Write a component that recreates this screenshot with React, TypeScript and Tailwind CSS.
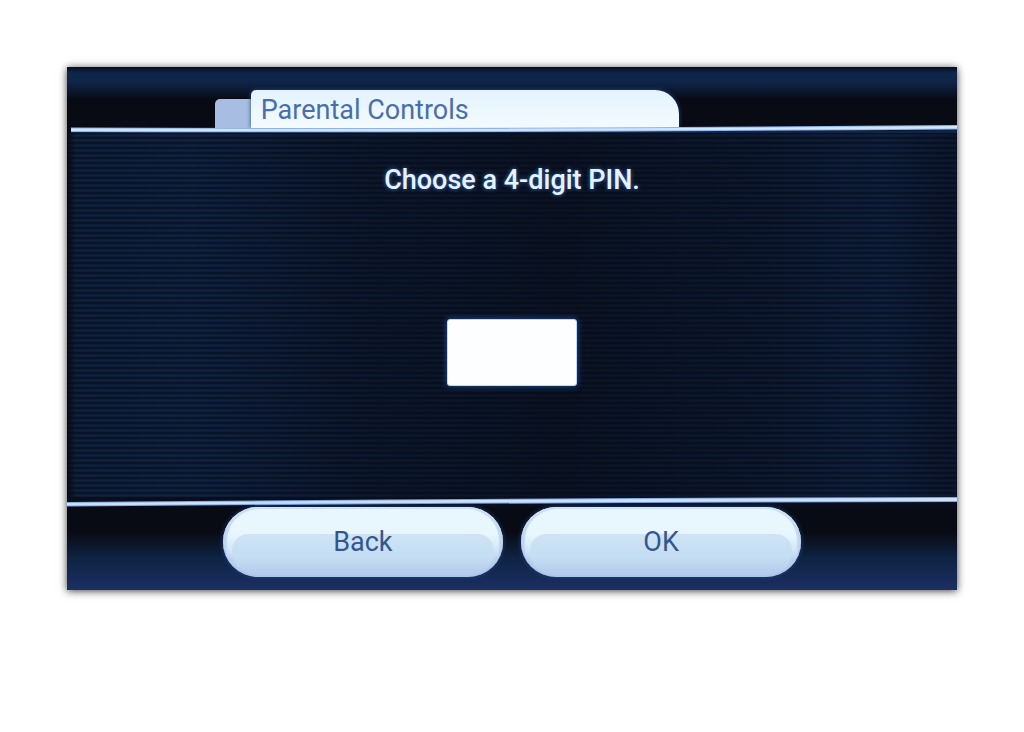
import { useState } from "react";
import type { ReactNode } from "react";

function PillButton({ children }: { children: ReactNode }) {
  return (
    <button
      type="button"
      className="relative h-[70px] min-w-0 flex-1 cursor-pointer overflow-hidden rounded-full bg-linear-to-b from-[#dcecf9] via-[#c8def4] via-60% to-[#b3c8e8] text-[27px] leading-[40px] text-[#34568f] shadow-[0_0_5px_#1d4583,inset_0_0_7px_#a9c4e8,inset_0_1px_1px_#ffffff]"
    >
      <span
        aria-hidden="true"
        className="absolute inset-x-[4px] top-[2px] h-[50px] rounded-t-[32px] bg-linear-to-b from-[#e8f6fe] from-50% to-transparent"
      />
      <span
        aria-hidden="true"
        className="absolute inset-x-[9px] top-[27px] bottom-[2px] rounded-t-[22px] rounded-b-[34px] bg-linear-to-b from-[#cfe3f5] via-[#c3ddf3] via-60% to-[#b4caea]"
      />
      <span className="relative">{children}</span>
    </button>
  );
}

export default function App() {
  const [pin, setPin] = useState("");

  return (
    <main className="min-h-screen bg-white p-[67px] font-[Roboto,'Liberation_Sans',sans-serif]">
      <section className="flex flex-col bg-[#080b14] shadow-[0_1px_8px_rgba(0,0,0,0.75)]">
        <header className="bg-[linear-gradient(180deg,#080e1b_0px,#10254a_6px,#10254a_14px,#0c1830_24px,#080b14_32px)] pt-[23px]">
          <div className="ml-[16.6%] flex w-[52.2%] items-end">
            <div className="h-[29px] w-[36px] shrink-0 rounded-tl-[5px] bg-[#a8bde2]" />
            <h1 className="h-[38px] min-w-0 flex-1 rounded-tl-[5px] rounded-tr-[24px] bg-linear-to-b from-[#e3f3fe] to-[#f4fbff] px-[10px] text-[27px] leading-[40px] font-normal whitespace-nowrap text-[#4a6ead] shadow-[0_0_4px_#1e4b8f]">
              Parental Controls
            </h1>
          </div>
        </header>

        <svg
          aria-hidden="true"
          viewBox="0 0 890 8"
          preserveAspectRatio="none"
          className="relative -mt-[3px] block h-[8px] w-full"
        >
          <path d="M4 8V5Q440 7 890 5V8Z" fill="#0e2345" />
          <path d="M4 2.5Q440 4 890 0V4.5Q440 8 4 7Z" fill="#8fb4ea" />
          <path d="M4 3.5Q440 5 890 1V3.5Q440 7 4 6Z" fill="#d0e5ff" />
        </svg>

        <div className="flex h-[364px] flex-col items-center bg-[linear-gradient(90deg,#080b14_0%,rgba(7,10,18,0.2)_1%,rgba(7,10,18,0.12)_14%,rgba(7,10,18,0.5)_34%,rgba(7,10,18,0.68)_55%,rgba(7,10,18,0.5)_74%,rgba(7,10,18,0.2)_92%,rgba(7,10,18,0.5)_100%),repeating-linear-gradient(180deg,#07101f_0px,#11264c_2px,#11264c_3px,#07101f_5px)] pt-[27px]">
          <label
            htmlFor="pin"
            className="text-[27px] leading-[40px] font-medium whitespace-nowrap text-[#e6f3ff] [text-shadow:0_0_4px_#3c73c4]"
          >
            Choose a 4-digit PIN.
          </label>
          <input
            id="pin"
            type="password"
            inputMode="numeric"
            maxLength={4}
            value={pin}
            onChange={(event) => setPin(event.target.value)}
            className="mt-[119px] h-[67px] w-[130px] rounded-[3px] border border-[#b9d7fa] bg-[#fdfeff] text-center text-[27px] text-[#34568f] shadow-[0_0_6px_#23549c] outline-none"
          />
        </div>

        <svg
          aria-hidden="true"
          viewBox="0 0 890 10"
          preserveAspectRatio="none"
          className="block h-[10px] w-full bg-[#080e1b]"
        >
          <path d="M0 5Q440 1 890 0V5Q440 6 0 9.5Z" fill="#7fa6e2" />
          <path d="M0 6Q440 2 890 1V4Q440 5 0 8.5Z" fill="#cbe1ff" />
        </svg>

        <footer className="bg-linear-to-b from-[#080b14] from-30% via-[#0f2344] via-62% to-[#1c2f63] pb-[13px]">
          <div className="mx-auto flex w-[65%] gap-[18px]">
            <PillButton>Back</PillButton>
            <PillButton>OK</PillButton>
          </div>
        </footer>
      </section>
    </main>
  );
}
